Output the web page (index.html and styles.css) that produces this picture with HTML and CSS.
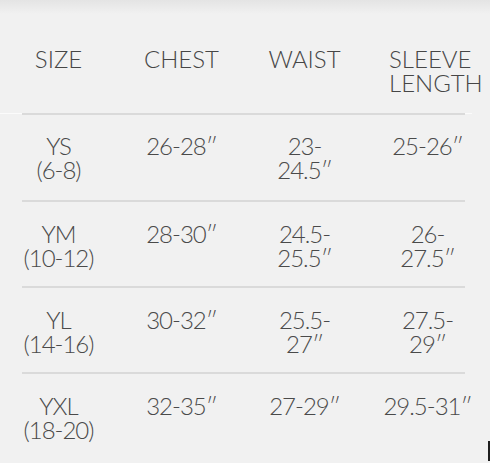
FILE: index.html
```html
<!DOCTYPE html>
<html lang="en">
<head>
<meta charset="utf-8">
<title>Size chart</title>
<link rel="stylesheet" href="styles.css">
</head>
<body>
<div class="chart">
  <div class="row head">
    <div class="cell">SIZE</div>
    <div class="cell">CHEST</div>
    <div class="cell">WAIST</div>
    <div class="cell left">SLEEVE<br>LENGTH</div>
  </div>
  <div class="row first">
    <div class="cell">YS<br>(6-8)</div>
    <div class="cell">26-28″</div>
    <div class="cell">23-<br>24.5″</div>
    <div class="cell">25-26″</div>
  </div>
  <div class="row">
    <div class="cell">YM<br>(10-12)</div>
    <div class="cell">28-30″</div>
    <div class="cell">24.5-<br>25.5″</div>
    <div class="cell">26-<br>27.5″</div>
  </div>
  <div class="row">
    <div class="cell">YL<br>(14-16)</div>
    <div class="cell">30-32″</div>
    <div class="cell">25.5-<br>27″</div>
    <div class="cell">27.5-<br>29″</div>
  </div>
  <div class="row last">
    <div class="cell">YXL<br>(18-20)</div>
    <div class="cell">32-35″</div>
    <div class="cell">27-29″</div>
    <div class="cell">29.5-31″</div>
  </div>
</div>
</body>
</html>
```
FILE: styles.css
```css
html, body {
  margin: 0;
  padding: 0;
}
body {
  width: 490px;
  height: 463px;
  overflow: hidden;
  background:
    linear-gradient(#1e1e1e, #1e1e1e) no-repeat 488px 441px / 2px 20px,
    linear-gradient(#e4e4e4, #f1f1f1 14px, #f1f1f1) no-repeat;
  font-family: Lato, "Open Sans", sans-serif;
  font-weight: 300;
  font-size: 24px;
  line-height: 24px;
  color: #4a4a4a;
}
.chart {
  margin-left: -3px;
  width: 492px;
}
.row {
  display: grid;
  grid-template-columns: repeat(4, 123px);
  height: 86px;
  padding-top: 20px;
  box-sizing: border-box;
  letter-spacing: -1px;
  background: linear-gradient(#dadada, #dadada) no-repeat 25px 100% / 443px 2px;
}
.row.head {
  height: 115px;
  padding-top: 47px;
  letter-spacing: 0;
  color: #464646;
  background:
    linear-gradient(#dadada, #dadada) no-repeat 25px 100% / 443px 2px,
    linear-gradient(#fbfbfb, #fbfbfb) no-repeat 0 113px / 475px 1px;
}
.row.first {
  height: 87px;
  padding-top: 19px;
}
.row.last {
  background: none;
}
.cell {
  text-align: center;
  white-space: nowrap;
}
.cell.left {
  text-align: left;
  padding-left: 23px;
}
```
